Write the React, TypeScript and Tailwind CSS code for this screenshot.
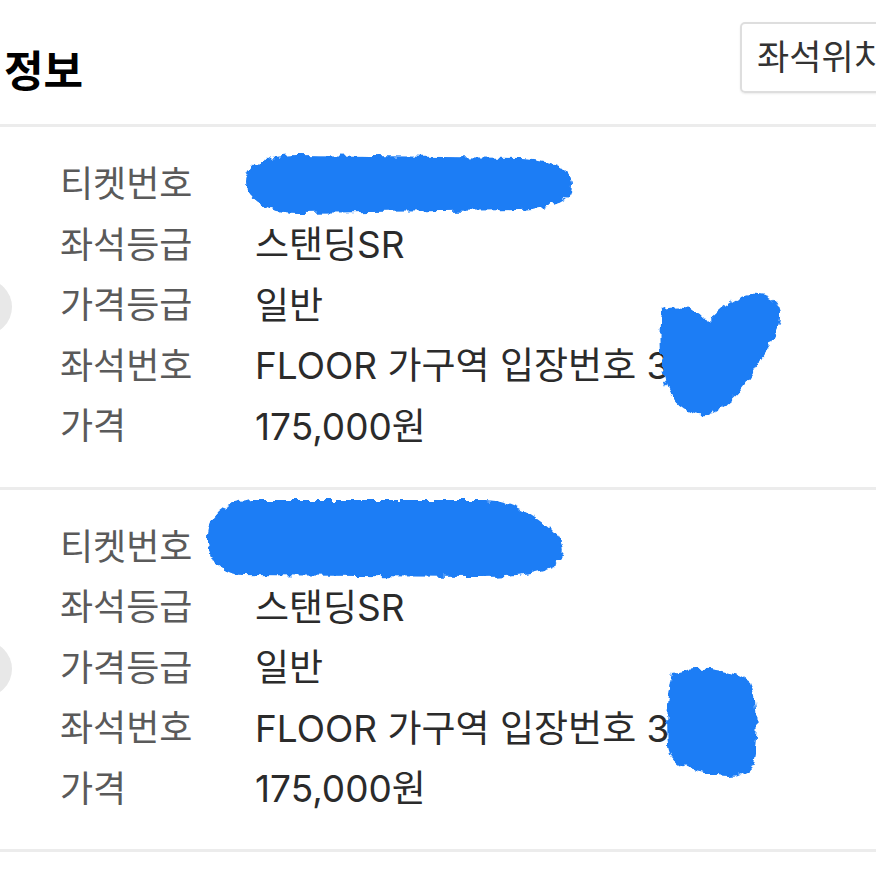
import React from "react";

const rows = [
  ["티켓번호", ""],
  ["좌석등급", "스탠딩SR"],
  ["가격등급", "일반"],
  ["좌석번호", "FLOOR 가구역 입장번호 3"],
  ["가격", "175,000원"],
];

const font = { fontFamily: "Inter, 'Noto Sans CJK KR', sans-serif" };

function Ticket() {
  return (
    <div className="relative pt-[27px] pb-[30px]">
      <div className="absolute left-[-44px] top-1/2 -translate-y-1/2 w-[56px] h-[56px] rounded-full bg-[#e8e8e8]" />
      {rows.map(([k, v]) => (
        <div key={k} className="flex h-[60.5px] items-center leading-none">
          <div className="w-[255px] pl-[60px] text-[36px] text-[#5a5a5a] shrink-0">{k}</div>
          <div className="text-[37px] text-[#2b2b2b] whitespace-nowrap">{v}</div>
        </div>
      ))}
    </div>
  );
}

export default function App() {
  return (
    <div className="relative w-[876px] h-[876px] bg-white overflow-hidden" style={font}>
      <div className="flex items-start h-[124px]">
        <div className="mt-[50px] pl-[4px] text-[43px] leading-[43px] font-bold text-black">정보</div>
        <div className="flex-1" />
        <div className="mt-[22px] mr-[-80px] w-[216px] h-[71px] shrink-0 border-2 border-[#dedede] rounded-[5px] shadow-[0_1px_2px_rgba(0,0,0,0.08)] flex items-center pl-[15px] text-[35px] text-[#333] whitespace-nowrap">
          좌석위치
        </div>
      </div>
      <div className="h-[3px] bg-[#ececec]" />
      <Ticket />
      <div className="h-[3px] bg-[#ececec]" />
      <Ticket />
      <div className="h-[3px] bg-[#ececec]" />

      <svg className="absolute inset-0 pointer-events-none" width="876" height="876" viewBox="0 0 876 876">
        <defs>
          <filter id="fuzz" x="-10%" y="-10%" width="120%" height="120%">
            <feTurbulence type="fractalNoise" baseFrequency="0.12" numOctaves="2" seed="3" result="n" />
            <feDisplacementMap in="SourceGraphic" in2="n" scale="9" xChannelSelector="R" yChannelSelector="G" />
          </filter>
        </defs>
        <g fill="#1d7df5" filter="url(#fuzz)">
          <path d="M245,182 C245,162 268,155 300,155 L520,158 C558,160 572,170 572,185 C572,200 555,208 520,210 L300,213 C265,213 245,200 245,182 Z" />
          <path d="M662,310 C675,305 695,308 703,316 L708,322 C720,308 735,297 750,294 C766,292 780,300 781,315 C782,330 768,348 756,368 C746,387 730,405 712,413 C695,418 678,408 670,393 C660,378 659,340 662,310 Z" />
          <path d="M208,536 C209,515 226,502 252,500 L480,500 C510,500 526,510 545,524 C564,538 569,556 554,566 C538,574 510,577 470,577 L242,575 C216,573 207,556 208,536 Z" />
          <path d="M673,673 C700,665 732,668 750,683 C759,702 758,740 752,765 C745,779 725,777 705,773 C685,770 669,762 668,745 C666,720 668,692 673,673 Z" />
        </g>
      </svg>
    </div>
  );
}
